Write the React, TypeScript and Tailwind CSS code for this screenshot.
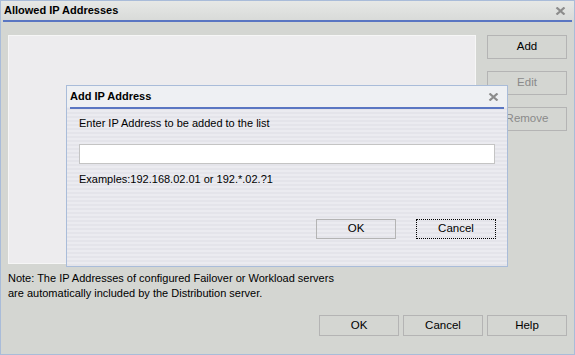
import React from 'react';

const font = "font-['Liberation_Sans',Arial,sans-serif]";

const Btn: React.FC<{ label: string; disabled?: boolean; focused?: boolean; className?: string }> = ({ label, disabled, focused, className = '' }) => (
  <div
    className={`flex items-center justify-center w-[80px] text-[11.5px] ${
      focused ? 'border border-dotted border-black' : 'border border-[#b4b4b4]'
    } ${disabled ? 'text-[#8a8a8a]' : 'text-black'} ${className}`}
  >
    {label}
  </div>
);

const CloseX: React.FC = () => (
  <svg width="11" height="8" viewBox="0 0 11 8" className="block">
    <path d="M1.5 0.5 L9.5 7.5 M9.5 0.5 L1.5 7.5" stroke="#8c8c8c" strokeWidth="2.2" />
  </svg>
);

export default function App() {
  return (
    <div className={`w-[575px] h-[355px] border border-[#a9bcd9] bg-[#d4d6d2] flex flex-col relative ${font}`}>
      {/* title bar */}
      <div className="h-[19px] flex items-center justify-between pl-[3px] pr-[8px] bg-gradient-to-b from-[#e6e8e6] to-[#d9dbd9]">
        <span className="text-[11px] font-bold text-black">Allowed IP Addresses</span>
        <CloseX />
      </div>
      <div className="h-[2px] mx-[2px] bg-[#5a76c2]" />

      {/* body */}
      <div className="flex gap-[11px] pt-[13px] pl-[7px] pr-[7px]">
        <div className="w-[468px] h-[229px] bg-[#edecee] border border-[#f6f6f6]" />
        <div className="flex flex-col gap-[12px]">
          <Btn label="Add" className="h-[24px]" />
          <Btn label="Edit" disabled className="h-[24px]" />
          <Btn label="Remove" disabled className="h-[24px]" />
        </div>
      </div>

      <div className="pl-[7px] pt-[7px] text-[11px] leading-[15px] text-black">
        <div>Note: The IP Addresses of configured Failover or Workload servers</div>
        <div>are automatically included by the Distribution server.</div>
      </div>

      <div className="flex justify-end gap-[4px] pr-[7px] mt-[14px]">
        <Btn label="OK" className="h-[21px]" />
        <Btn label="Cancel" className="h-[21px]" />
        <Btn label="Help" className="h-[21px]" />
      </div>

      {/* modal */}
      <div className="absolute left-[65px] top-[84px] w-[442px] h-[182px] border border-[#a9bcd9] flex flex-col bg-[repeating-linear-gradient(to_bottom,#ebebf0_0px,#ebebf0_2px,#e4e4ea_2px,#e4e4ea_4px)]">
        <div className="h-[21px] flex items-center justify-between pl-[3px] pr-[8px] bg-[#eef0f3]">
          <span className="text-[11px] font-bold text-black">Add IP Address</span>
          <CloseX />
        </div>
        <div className="h-[2px] mx-[3px] bg-[#5a76c2]" />
        <div className="flex flex-col px-[12px]">
          <div className="text-[11px] text-black pt-[7px] leading-[15px]">Enter IP Address to be added to the list</div>
          <div className="mt-[13px] h-[20px] w-[416px] bg-white border border-[#c4c4c4]" />
          <div className="text-[11px] text-black mt-[8px] leading-[15px]">Examples:192.168.02.01 or 192.*.02.?1</div>
          <div className="flex justify-end gap-[20px] mt-[32px] mr-[-1px]">
            <Btn label="OK" className="h-[20px]" />
            <Btn label="Cancel" focused className="h-[20px]" />
          </div>
        </div>
      </div>
    </div>
  );
}
